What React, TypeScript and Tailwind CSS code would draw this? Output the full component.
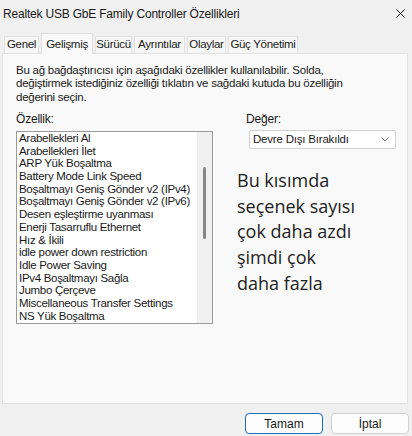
import React from "react";

const items = [
  "Arabellekleri Al",
  "Arabellekleri İlet",
  "ARP Yük Boşaltma",
  "Battery Mode Link Speed",
  "Boşaltmayı Geniş Gönder v2 (IPv4)",
  "Boşaltmayı Geniş Gönder v2 (IPv6)",
  "Desen eşleştirme uyanması",
  "Enerji Tasarruflu Ethernet",
  "Hız & İkili",
  "idle power down restriction",
  "Idle Power Saving",
  "IPv4 Boşaltmayı Sağla",
  "Jumbo Çerçeve",
  "Miscellaneous Transfer Settings",
  "NS Yük Boşaltma",
];

const tabs = [
  { label: "Genel", w: "w-[35px]" },
  { label: "Gelişmiş", w: "w-[52px]", active: true },
  { label: "Sürücü", w: "w-[37px]" },
  { label: "Ayrıntılar", w: "w-[51px]" },
  { label: "Olaylar", w: "w-[39px]" },
  { label: "Güç Yönetimi", w: "w-[70px]" },
];

export default function App() {
  return (
    <div
      className="w-[412px] h-[436px] bg-[#f0f0f0] text-[#1a1a1a] flex flex-col overflow-hidden"
      style={{ fontFamily: '"Liberation Sans", Arial, sans-serif' }}
    >
      {/* Title bar */}
      <div className="h-[28px] flex items-center justify-between pl-[3px] pr-[7px]">
        <span className="text-[12px] tracking-[-0.2px]">
          Realtek USB GbE Family Controller Özellikleri
        </span>
        <svg width="9" height="9" viewBox="0 0 9 9" className="mb-[2px]">
          <path d="M0.5 0.5 L8.5 8.5 M8.5 0.5 L0.5 8.5" stroke="#1a1a1a" strokeWidth="1" />
        </svg>
      </div>

      {/* Tabs */}
      <div className="h-[25px] flex items-end pl-[4px] gap-[2px]">
        {tabs.map((t) =>
          t.active ? (
            <div
              key={t.label}
              className={`${t.w} h-[21px] relative z-10 -mb-px bg-[#f9f9f9] border border-b-0 border-[#dedede] flex items-start justify-center pt-[2px] text-[11.5px] tracking-[-0.3px] whitespace-nowrap`}
            >
              {t.label}
            </div>
          ) : (
            <div
              key={t.label}
              className={`${t.w} h-[17px] bg-[#f6f6f6] border border-b-0 border-[#e3e3e3] flex items-center justify-center text-[11.5px] tracking-[-0.3px] whitespace-nowrap`}
            >
              {t.label}
            </div>
          )
        )}
      </div>

      {/* Panel */}
      <div className="ml-[2px] mr-[4px] h-[351px] bg-[#f9f9f9] border border-[#e2e2e2] pl-[13px] pt-[10px]">
        <p className="text-[11.5px] leading-[13.3px] tracking-[-0.25px]">
          Bu ağ bağdaştırıcısı için aşağıdaki özellikler kullanılabilir. Solda,
          <br />
          değiştirmek istediğiniz özelliği tıklatın ve sağdaki kutuda bu özelliğin
          <br />
          değerini seçin.
        </p>

        <div className="flex mt-[8px]">
          {/* Left column */}
          <div className="w-[197px] flex flex-col">
            <div className="text-[12px] leading-[14px] h-[14px] tracking-[-0.2px]">Özellik:</div>
            <div className="mt-[5px] h-[193px] bg-white border border-[#9a9a9a] flex">
              <div className="flex-1 pl-[2px] overflow-hidden">
                {items.map((it) => (
                  <div
                    key={it}
                    className="text-[11.5px] leading-[12.7px] whitespace-nowrap tracking-[-0.3px]"
                  >
                    {it}
                  </div>
                ))}
              </div>
              <div className="w-[15px] bg-[#f0f0f0] pt-[35px] pl-[6px]">
                <div className="w-[3px] h-[72px] rounded-full bg-[#878787]" />
              </div>
            </div>
          </div>

          {/* Right column */}
          <div className="ml-[33px] flex flex-col">
            <div className="text-[12px] leading-[14px] h-[14px] tracking-[-0.2px]">Değer:</div>
            <div className="mt-[4px] ml-[3px] w-[147px] h-[19px] bg-white border border-[#d0d0d0] rounded-[2px] flex items-center justify-between pl-[3px] pr-[6px]">
              <span className="text-[11.5px] tracking-[-0.2px]">Devre Dışı Bırakıldı</span>
              <svg width="8" height="5" viewBox="0 0 8 5">
                <path d="M0.5 0.5 L4 4 L7.5 0.5" fill="none" stroke="#7a7a7a" strokeWidth="1" />
              </svg>
            </div>
            <div
              className="mt-[19px] -ml-[9px] text-[18px] leading-[25.7px] text-[#1e1e1e]"
              style={{ fontFamily: '"Open Sans", "Noto Sans", sans-serif' }}
            >
              Bu kısımda
              <br />
              seçenek sayısı
              <br />
              çok daha azdı
              <br />
              şimdi çok
              <br />
              daha fazla
            </div>
          </div>
        </div>
      </div>

      {/* Buttons */}
      <div className="flex justify-end gap-[8px] pr-[3px] mt-[9px]">
        <button className="w-[78px] h-[21px] bg-[#fdfdfd] border-[1.5px] border-[#1d6fc0] rounded-[4px] text-[12px] flex items-center justify-center">
          Tamam
        </button>
        <button className="w-[78px] h-[21px] bg-[#fdfdfd] border border-[#d0d0d0] rounded-[4px] text-[12px] flex items-center justify-center">
          İptal
        </button>
      </div>
    </div>
  );
}
